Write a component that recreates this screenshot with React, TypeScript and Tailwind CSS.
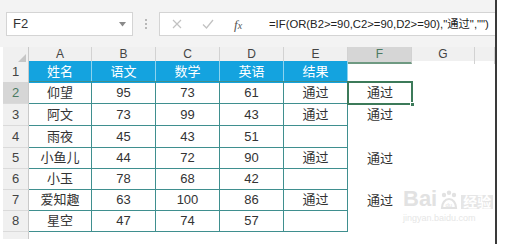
import { Fragment } from 'react';

const cols = ['A', 'B', 'C', 'D', 'E', 'F', 'G', ''];
const head = ['姓名', '语文', '数学', '英语', '结果'];

const rows: string[][] = [
  ['仰望', '95', '73', '61', '通过', '通过'],
  ['阿文', '73', '99', '43', '通过', '通过'],
  ['雨夜', '45', '43', '51', '', ''],
  ['小鱼儿', '44', '72', '90', '通过', '通过'],
  ['小玉', '78', '68', '42', '', ''],
  ['爱知趣', '63', '100', '86', '通过', '通过'],
  ['星空', '47', '74', '57', '', ''],
];

// 行高 — 截图里 1~4 行略高
const heights = ['h-[22px]', 'h-[22px]', 'h-[22px]', 'h-[21px]', 'h-[21px]', 'h-[21px]', 'h-[21px]'];

const grid = 'grid grid-cols-[26px_63px_64px_64px_64px_64px_64px_63px_1fr]';

export default function App() {
  return (
    <div className="w-[506px] h-[244px] overflow-hidden bg-white flex font-['Liberation_Sans','Noto_Sans_CJK_SC',sans-serif] text-[#333]">
      <div className="w-[497px] h-full flex flex-col border-r-2 border-[#3a3a3a]">
        {/* Formula bar */}
        <div className="h-[47px] bg-[#f3f3f3] pt-[12px] pl-[6px] flex items-start">
          <div className="w-[127px] shrink-0 h-[24px] bg-white border border-[#d4d4d4] flex items-center justify-between pl-[6px] pr-[6px] text-[13px]">
            <span>F2</span>
            <svg width="7" height="5" viewBox="0 0 7 5">
              <path d="M0 0h7L3.5 4.5z" fill="#8a8a8a" />
            </svg>
          </div>
          <div className="w-[26px] shrink-0 h-[24px] flex flex-col items-center justify-center gap-[2px]">
            <span className="w-[2px] h-[2px] bg-[#b8b8b8]" />
            <span className="w-[2px] h-[2px] bg-[#b8b8b8]" />
            <span className="w-[2px] h-[2px] bg-[#b8b8b8]" />
          </div>
          <div className="flex-1 min-w-0 h-[24px] bg-white border border-[#d4d4d4] border-r-0 flex items-center overflow-hidden">
            <div className="w-[109px] flex items-center pl-[12px] gap-[20px] shrink-0">
              <svg width="10" height="10" viewBox="0 0 10 10">
                <path d="M1 1l8 8M9 1l-8 8" stroke="#c2c2c2" strokeWidth="1.2" />
              </svg>
              <svg width="12" height="10" viewBox="0 0 12 10">
                <path d="M1 5.5l3.5 3.5L11 1" stroke="#c2c2c2" strokeWidth="1.3" fill="none" />
              </svg>
              <span className="font-['Liberation_Serif',serif] italic text-[13px] text-[#555] leading-none">
                f<span className="text-[10px]">x</span>
              </span>
            </div>
            <span className="text-[11.3px] whitespace-nowrap text-[#222]">
              =IF(OR(B2&gt;=90,C2&gt;=90,D2&gt;=90),"通过","")
            </span>
          </div>
        </div>

        {/* Sheet */}
        <div className="flex-1 pl-[3px] relative">
          {/* column headers */}
          <div className={`${grid} h-[14px] bg-[#f0f0f0]`}>
            <div className="border-r border-[#c9c9c9] relative">
              <svg className="absolute right-[2px] bottom-[2px]" width="8" height="8" viewBox="0 0 8 8">
                <path d="M8 0v8H0z" fill="#c6c6c6" />
              </svg>
            </div>
            {cols.map((c, i) => (
              <div
                key={i}
                className={`text-[12px] leading-[15px] text-center border-r border-[#d2d2d2] ${
                  c === 'F' ? 'bg-[#d6d6d6] text-[#4b7a62] border-b-2 border-b-[#6f9a82]' : 'text-[#444]'
                }`}
              >
                {c}
              </div>
            ))}
          </div>

          {/* row 1 */}
          <div className={`${grid} h-[21px]`}>
            <div className="bg-[#f0f0f0] border-r border-b border-[#c9c9c9] text-[13px] text-[#444] text-center leading-[21px]">
              1
            </div>
            {head.map((h, i) => (
              <div
                key={i}
                className="bg-[#14a3df] text-white text-[13px] text-center leading-[21px] border-r border-[#8dd3ef]"
              >
                {h}
              </div>
            ))}
            <div />
            <div />
            <div />
          </div>

          {rows.map((r, ri) => {
            const selected = ri === 0;
            return (
              <div key={ri} className={`${grid} ${heights[ri]}`}>
                <div
                  className={`border-r border-b border-[#c9c9c9] border-b-[#dadada] text-[13px] text-center flex items-center justify-center ${
                    selected ? 'bg-[#d6d6d6] text-[#4b7a62]' : 'bg-[#f0f0f0] text-[#444]'
                  }`}
                >
                  {ri + 2}
                </div>
                {r.slice(0, 5).map((v, ci) => (
                  <div
                    key={ci}
                    className={`border-r border-b border-[#3f8f8f] text-[13px] flex items-center justify-center ${
                      ri === 0 ? 'border-t border-t-[#3f8f8f] -mt-px' : ''
                    }`}
                  >
                    {v}
                  </div>
                ))}
                <div className="relative flex items-center justify-center text-[13px]">
                  {r[5]}
                  {selected && (
                    <Fragment>
                      <div className="absolute left-[-1px] right-[-1px] top-[-1px] bottom-[-1px] border-2 border-[#3c7a59]" />
                      <div className="absolute right-[-3px] bottom-[-3px] w-[5px] h-[5px] bg-[#3c7a59] border border-white" />
                    </Fragment>
                  )}
                </div>
                <div />
                <div />
              </div>
            );
          })}

          {/* row 9 partial */}
          <div className={`${grid} h-[7px]`}>
            <div className="bg-[#f0f0f0] border-r border-[#c9c9c9]" />
          </div>

          {/* Baidu watermark */}
          <div className="absolute left-[403px] top-[141px] flex flex-col items-start text-[#e2e2e2] pointer-events-none">
            <div className="flex items-end gap-[2px]">
              <span className="text-[22px] font-bold leading-none">Bai</span>
              <svg width="20" height="20" viewBox="0 0 20 20">
                <circle cx="5" cy="5" r="2.2" fill="#e2e2e2" />
                <circle cx="10" cy="2.8" r="2.2" fill="#e2e2e2" />
                <circle cx="15" cy="5" r="2.2" fill="#e2e2e2" />
                <path d="M3 18c0-5 3-9 7-9s7 4 7 9z" fill="none" stroke="#e2e2e2" strokeWidth="2.2" />
                <text x="6.5" y="17" fontSize="6" fill="#e2e2e2" fontFamily="Liberation Sans">du</text>
              </svg>
              <span className="text-[14px] leading-none bg-[#e6e6e6] text-white px-[2px] font-bold mb-[1px]">
                经验
              </span>
            </div>
            <span className="text-[9px] leading-none mt-[4px] text-[#e6e6e6]">jingyan.baidu.com</span>
          </div>
        </div>
      </div>
    </div>
  );
}
